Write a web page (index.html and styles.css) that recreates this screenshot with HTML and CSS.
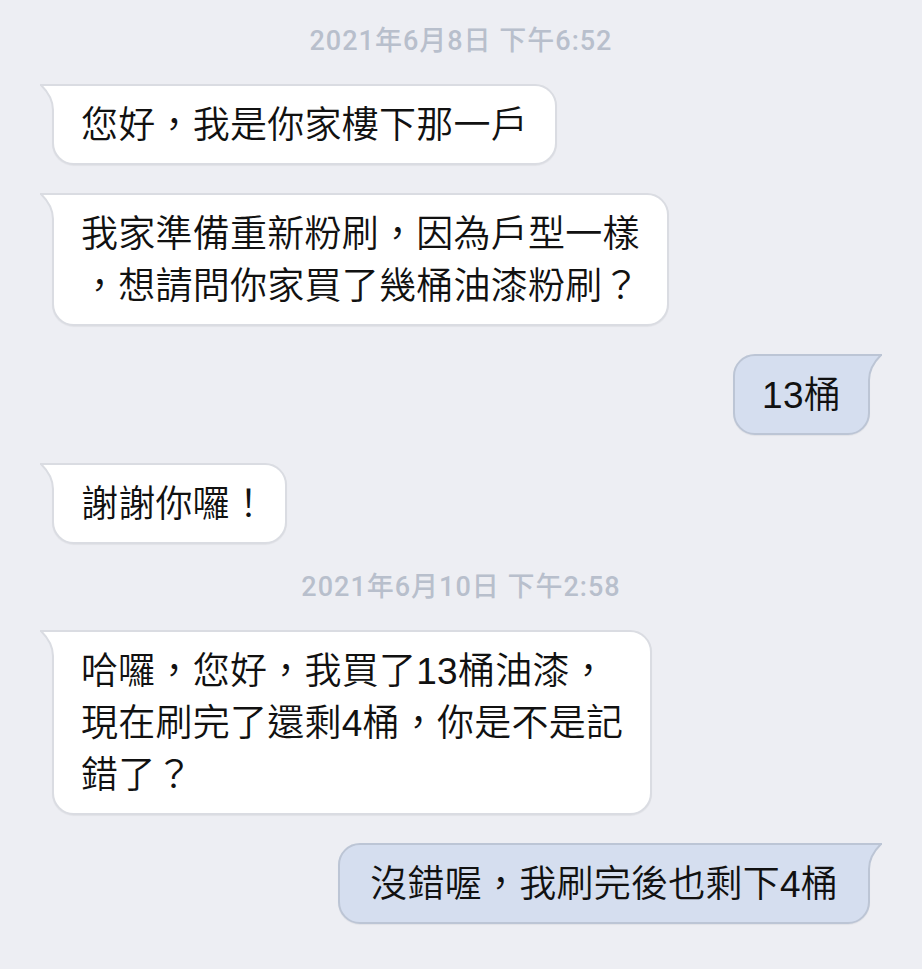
FILE: index.html
```html
<!DOCTYPE html>
<html lang="zh-Hant">
<head>
<meta charset="utf-8">
<title>Chat</title>
<link rel="stylesheet" href="styles.css">
</head>
<body>
<div class="chat">
  <div class="stamp">2021年6月8日 下午6:52</div>

  <div class="row in">
    <div class="bubble">您好，我是你家樓下那一戶<svg class="tail" viewBox="0 0 18 26" width="18" height="26"><path class="tf" d="M1 1 Q13 13 13 24 V26 H18 V0 H1 Z"/><path class="ts" d="M0 1 H18 M1 1 Q13 13 13 26"/></svg></div>
  </div>

  <div class="row in">
    <div class="bubble">我家準備重新粉刷，因為戶型一樣<br>，想請問你家買了幾桶油漆粉刷？<svg class="tail" viewBox="0 0 18 26" width="18" height="26"><path class="tf" d="M1 1 Q13 13 13 24 V26 H18 V0 H1 Z"/><path class="ts" d="M0 1 H18 M1 1 Q13 13 13 26"/></svg></div>
  </div>

  <div class="row out">
    <div class="bubble">13桶<svg class="tail" viewBox="0 0 18 26" width="18" height="26"><path class="tf" d="M1 1 Q13 13 13 24 V26 H18 V0 H1 Z"/><path class="ts" d="M0 1 H18 M1 1 Q13 13 13 26"/></svg></div>
  </div>

  <div class="row in">
    <div class="bubble tight">謝謝你囉！<svg class="tail" viewBox="0 0 18 26" width="18" height="26"><path class="tf" d="M1 1 Q13 13 13 24 V26 H18 V0 H1 Z"/><path class="ts" d="M0 1 H18 M1 1 Q13 13 13 26"/></svg></div>
  </div>

  <div class="stamp">2021年6月10日 下午2:58</div>

  <div class="row in">
    <div class="bubble">哈囉，您好，我買了13桶油漆，<br>現在刷完了還剩4桶，你是不是記<br>錯了？<svg class="tail" viewBox="0 0 18 26" width="18" height="26"><path class="tf" d="M1 1 Q13 13 13 24 V26 H18 V0 H1 Z"/><path class="ts" d="M0 1 H18 M1 1 Q13 13 13 26"/></svg></div>
  </div>

  <div class="row out">
    <div class="bubble wide">沒錯喔，我刷完後也剩下4桶<svg class="tail" viewBox="0 0 18 26" width="18" height="26"><path class="tf" d="M1 1 Q13 13 13 24 V26 H18 V0 H1 Z"/><path class="ts" d="M0 1 H18 M1 1 Q13 13 13 26"/></svg></div>
  </div>
</div>
</body>
</html>
```

FILE: styles.css
```css
html, body {
  margin: 0;
  padding: 0;
  background: #edeef3;
}

.chat {
  display: flex;
  flex-direction: column;
  gap: 28px;
  padding: 26px 52px 40px;
  font-family: "Liberation Sans", "Noto Sans CJK TC", sans-serif;
}

.stamp {
  align-self: center;
  font-family: Roboto, "Noto Sans CJK TC", sans-serif;
  font-weight: 500;
  font-size: 27px;
  letter-spacing: 1px;
  line-height: 30px;
  color: #b8bfcc;
}

.row {
  display: flex;
}

.row.in {
  align-self: flex-start;
}

.row.out {
  align-self: flex-end;
}

.bubble {
  position: relative;
  background: #ffffff;
  border: 2px solid #dadce2;
  border-radius: 22px;
  padding: 14px 27px 11px 27px;
  font-size: 37px;
  font-weight: 350;
  letter-spacing: 0.25px;
  line-height: 52px;
  color: #111111;
  white-space: nowrap;
  box-shadow: 0 1px 1px rgba(0, 0, 0, 0.05);
}

.bubble.tight {
  padding-right: 18px;
}

.bubble.wide {
  padding-left: 30px;
  padding-right: 30px;
}

.in .bubble {
  border-top-left-radius: 0;
}

.out .bubble {
  background: #d5deef;
  border-color: #bcc5d5;
  border-top-right-radius: 0;
}

.tail {
  position: absolute;
  top: -2px;
  left: -14px;
  display: block;
  overflow: visible;
}

.out .tail {
  left: auto;
  right: -14px;
  transform: scaleX(-1);
}

.tail .tf {
  fill: #ffffff;
}

.tail .ts {
  fill: none;
  stroke: #dadce2;
  stroke-width: 2;
}

.out .tail .tf {
  fill: #d5deef;
}

.out .tail .ts {
  stroke: #bcc5d5;
}
```
